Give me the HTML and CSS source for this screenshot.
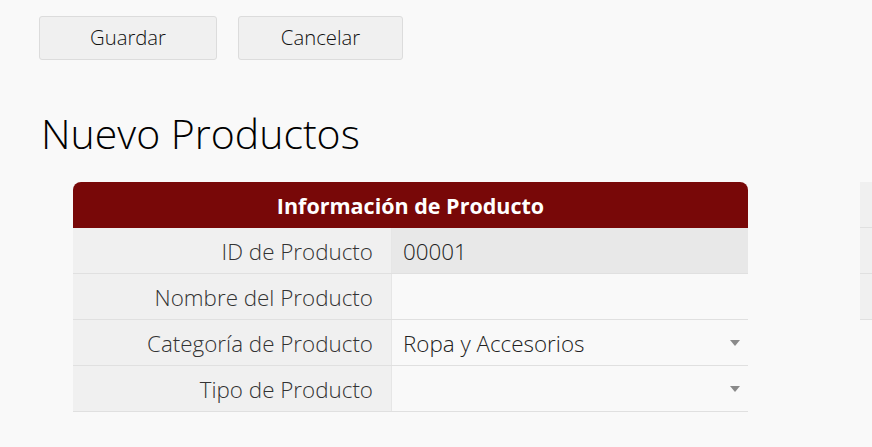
FILE: index.html
```html
<!DOCTYPE html>
<html lang="es">
<head>
<meta charset="utf-8">
<link rel="stylesheet" href="styles.css">
</head>
<body>
<div class="toolbar">
  <button class="btn btn-save">Guardar</button>
  <button class="btn btn-cancel">Cancelar</button>
</div>
<h1 class="title">Nuevo Productos</h1>
<div class="content">
  <div class="form">
    <div class="form-head">Información de Producto</div>
    <div class="row">
      <div class="label">ID de Producto</div>
      <div class="value readonly">00001</div>
    </div>
    <div class="row">
      <div class="label">Nombre del Producto</div>
      <div class="value"></div>
    </div>
    <div class="row">
      <div class="label">Categoría de Producto</div>
      <div class="value select">Ropa y Accesorios<span class="caret"></span></div>
    </div>
    <div class="row">
      <div class="label">Tipo de Producto</div>
      <div class="value select"><span class="caret"></span></div>
    </div>
  </div>
  <div class="side">
    <div class="side-cell"></div>
    <div class="side-cell"></div>
    <div class="side-cell"></div>
  </div>
</div>
</body>
</html>
```
FILE: styles.css
```css
html, body {
  margin: 0;
  padding: 0;
  background: #f9f9f9;
  font-family: "Open Sans", "Liberation Sans", sans-serif;
  color: #222;
  overflow: hidden;
}
.toolbar {
  display: flex;
  gap: 21px;
  padding: 16px 0 0 39px;
}
.btn {
  height: 44px;
  box-sizing: border-box;
  border: 1px solid #dcdcdc;
  border-radius: 3px;
  background: #f0f0f0;
  font-family: "Open Sans", "Liberation Sans", sans-serif;
  font-size: 20.3px;
  font-weight: 300;
  color: #111;
  padding: 0 0 2px;
}
.btn-save { width: 178px; }
.btn-cancel { width: 165px; }
.title {
  margin: 47px 0 0 41px;
  font-size: 41px;
  font-weight: 300;
  line-height: 52px;
  color: #000;
}
.content {
  display: flex;
  margin-top: 23px;
  padding-left: 73px;
}
.form {
  width: 675px;
  flex: none;
}
.form-head {
  height: 46px;
  background: #780808;
  border-radius: 8px 8px 0 0;
  color: #fff;
  font-weight: 700;
  font-size: 21.5px;
  display: flex;
  align-items: center;
  justify-content: center;
}
.row {
  display: flex;
  height: 46px;
  box-sizing: border-box;
  border-bottom: 1px solid #e0e0e0;
}
.label {
  width: 319px;
  flex: none;
  box-sizing: border-box;
  background: #f0f0f0;
  border-right: 1px solid #e6e6e6;
  text-align: right;
  padding: 1px 18px 0 0;
  font-size: 22.4px;
  font-weight: 300;
  color: #333;
  line-height: 45px;
}
.value {
  flex: 1;
  position: relative;
  padding: 1px 0 0 11px;
  font-size: 22.4px;
  font-weight: 300;
  color: #222;
  line-height: 45px;
  background: #f9f9f9;
}
.value.readonly { background: #e8e8e8; }
.caret {
  position: absolute;
  right: 8px;
  top: 20px;
  width: 0;
  height: 0;
  border-left: 5px solid transparent;
  border-right: 5px solid transparent;
  border-top: 6px solid #8a8a8a;
}
.side {
  margin-left: 112px;
  flex: 1;
}
.side-cell {
  height: 46px;
  box-sizing: border-box;
  background: #f0f0f0;
  border-bottom: 1px solid #e0e0e0;
}
```
